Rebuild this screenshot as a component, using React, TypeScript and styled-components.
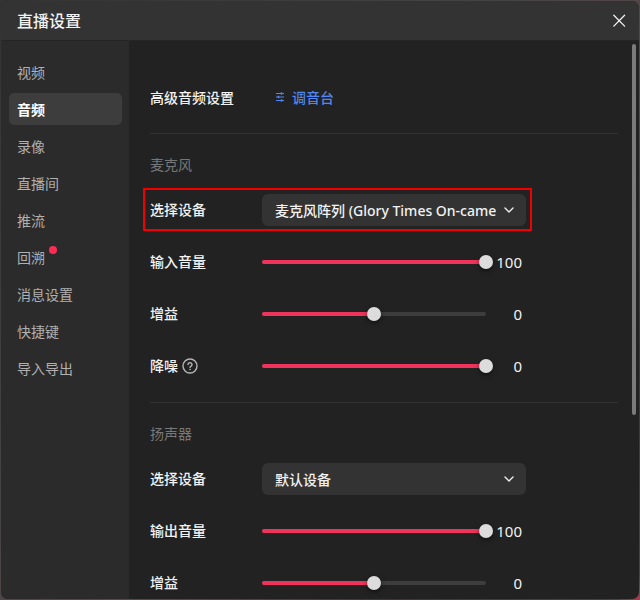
import React, { useState } from "react";
import styled, { createGlobalStyle, css } from "styled-components";

const GlobalStyle = createGlobalStyle`
  *, *::before, *::after { box-sizing: border-box; }
  body {
    margin: 0;
    background: linear-gradient(135deg, #333 0%, #444 40%, #5a484b 60%, #3c3638 80%, #444 98%, #b03a50 100%);
    color: #f2f2f2;
    font: 14px/20px "Noto Sans", "Noto Sans CJK SC", sans-serif;
  }
  button, input, select { font: inherit; color: inherit; }
`;

const Page = styled.div`
  height: 100vh;
  padding: 1px;
`;

const Dialog = styled.div`
  display: flex;
  flex-direction: column;
  height: 100%;
  overflow: hidden;
  border-radius: 7px;
  background: #222;
`;

const Header = styled.header`
  display: flex;
  flex: none;
  align-items: center;
  justify-content: space-between;
  height: 40px;
  padding: 0 13px 0 16px;
  background: #333;
  border-bottom: 1px solid #252525;
`;

const Title = styled.h1`
  margin: 0;
  font-size: 16px;
  line-height: 24px;
  font-weight: 500;
`;

const CloseButton = styled.button`
  display: flex;
  padding: 0;
  border: 0;
  background: none;
  cursor: pointer;
`;

const Body = styled.div`
  display: flex;
  flex: 1;
  min-height: 0;
`;

const Sidebar = styled.nav`
  display: flex;
  flex: 0 0 128px;
  flex-direction: column;
  gap: 5px;
  padding: 15px 7px 0 8px;
  background: #2b2b2b;
`;

const NavItem = styled.button<{ $active: boolean }>`
  height: 32px;
  padding: 2px 8px 0;
  border: 0;
  border-radius: 5px;
  background: none;
  color: #b0b0b0;
  text-align: left;
  cursor: pointer;
  ${(p) =>
    p.$active &&
    css`
      background: #3d3d3d;
      color: #fff;
      font-weight: 700;
    `}
`;

const NavText = styled.span`
  position: relative;
`;

const Dot = styled.i`
  position: absolute;
  top: -2px;
  right: -12px;
  width: 8px;
  height: 8px;
  border-radius: 50%;
  background: #fe2c55;
`;

const Content = styled.main`
  position: relative;
  flex: 1;
  min-width: 0;
  overflow: hidden;
  padding: 0 21px;
`;

const ScrollThumb = styled.div`
  position: absolute;
  top: 3px;
  right: 3px;
  width: 4px;
  height: 371px;
  border-radius: 2px;
  background: #7b7b7b;
`;

const Intro = styled.div`
  padding: 41px 0 19px;
`;

const Section = styled.section`
  display: flex;
  flex-direction: column;
  gap: 20px;
  padding: 21px 0 20px;
  border-top: 1px solid #323232;
`;

const SectionTitle = styled.h2`
  margin: 0 0 -1px;
  color: #777;
  font-size: 14px;
  line-height: 20px;
  font-weight: 400;
`;

const Row = styled.div<{ $marked?: boolean }>`
  position: relative;
  display: grid;
  grid-template-columns: 112px 1fr;
  align-items: center;
  height: 32px;
  max-width: 376px;
  font-weight: 500;
  ${(p) =>
    p.$marked &&
    css`
      &::after {
        content: "";
        position: absolute;
        inset: -6px -6px -5px -7px;
        border: 2px solid #f00000;
        pointer-events: none;
      }
    `}
`;

const LabelCell = styled.div`
  display: flex;
  align-items: center;
  gap: 4px;
`;

const HelpButton = styled(CloseButton)`
  color: #b4b4b4;
`;

const MixerLink = styled.a`
  display: flex;
  align-items: center;
  gap: 6px;
  padding-left: 12px;
  color: #4f86f0;
  text-decoration: none;
`;

const SelectBox = styled.div`
  position: relative;
  height: 32px;
`;

const Select = styled.select`
  width: 100%;
  height: 32px;
  padding: 1px 30px 0 13px;
  appearance: none;
  border: 0;
  border-radius: 6px;
  background: #333;
  font-weight: 500;
  text-overflow: clip;
`;

const Chevron = styled.svg`
  position: absolute;
  top: 11px;
  right: 12px;
  pointer-events: none;
`;

const SliderCell = styled.div`
  display: flex;
  align-items: center;
`;

const SliderBox = styled.div`
  position: relative;
  flex: 1;
  height: 14px;
  padding: 5px 0;
`;

const Rail = styled.div`
  height: 4px;
  border-radius: 2px;
  background: #3d3d3d;
`;

const Fill = styled.div`
  height: 4px;
  border-radius: 2px;
  background: #f0335a;
`;

const Range = styled.input`
  position: absolute;
  inset: 0 -7px;
  width: calc(100% + 14px);
  height: 14px;
  margin: 0;
  appearance: none;
  background: none;
  cursor: pointer;
  &::-webkit-slider-thumb {
    appearance: none;
    width: 14px;
    height: 14px;
    border-radius: 50%;
    background: #dcdcdc;
    box-shadow: 0 2px 5px rgba(0, 0, 0, 0.5);
  }
`;

const Value = styled.output`
  flex: 0 0 40px;
  padding-right: 4px;
  font-size: 15px;
  font-weight: 400;
  text-align: right;
`;

function SelectRow({ id, option, marked }: { id: string; option: string; marked?: boolean }) {
  return (
    <Row $marked={marked}>
      <label htmlFor={id}>选择设备</label>
      <SelectBox>
        <Select id={id}>
          <option>{option}</option>
        </Select>
        <Chevron width="10" height="10" viewBox="0 0 10 10" fill="none" stroke="#eee" strokeWidth="1.4" strokeLinecap="round" strokeLinejoin="round">
          <path d="M1 3l4 4 4-4" />
        </Chevron>
      </SelectBox>
    </Row>
  );
}

function SliderRow({ id, label, position, value, help }: { id: string; label: string; position: number; value: number; help?: boolean }) {
  const [current, setCurrent] = useState(position);
  return (
    <Row>
      <LabelCell>
        <label htmlFor={id}>{label}</label>
        {help && (
          <HelpButton type="button" aria-label="降噪说明">
            <svg width="16" height="16" viewBox="0 0 16 16" fill="none" stroke="currentColor" strokeWidth="1.4">
              <circle cx="8" cy="8" r="7" />
              <path d="M6 6.5a2 1.9 0 1 1 3.1 1.6C8.300 8.600 8 8.900 8 9.600" strokeLinecap="round" strokeWidth="1.4" />
              <circle cx="8" cy="11.500" r=".8" fill="currentColor" stroke="none" />
            </svg>
          </HelpButton>
        )}
      </LabelCell>
      <SliderCell>
        <SliderBox>
          <Rail>
            <Fill style={{ width: `${current}%` }} />
          </Rail>
          <Range id={id} type="range" min={0} max={100} value={current} onChange={(e) => setCurrent(Number(e.target.value))} />
        </SliderBox>
        <Value htmlFor={id}>{value + current - position}</Value>
      </SliderCell>
    </Row>
  );
}

const navItems = ["视频", "音频", "录像", "直播间", "推流", "回溯", "消息设置", "快捷键", "导入导出"];

export default function App() {
  const [active, setActive] = useState("音频");
  return (
    <Page>
      <GlobalStyle />
      <Dialog role="dialog" aria-labelledby="dialog-title">
        <Header>
          <Title id="dialog-title">直播设置</Title>
          <CloseButton type="button" aria-label="关闭">
            <svg width="14" height="14" viewBox="0 0 14 14" fill="none" stroke="#f2f2f2" strokeWidth="1.3" strokeLinecap="round">
              <path d="M1.800 1.300l10.800 10.800M12.600 1.300l-10.800 10.800" />
            </svg>
          </CloseButton>
        </Header>
        <Body>
          <Sidebar>
            {navItems.map((name) => (
              <NavItem key={name} type="button" $active={name === active} onClick={() => setActive(name)}>
                <NavText>
                  {name}
                  {name === "回溯" && <Dot />}
                </NavText>
              </NavItem>
            ))}
          </Sidebar>
          <Content>
            <Intro>
              <Row>
                <span>高级音频设置</span>
                <MixerLink href="#mixer">
                  <svg width="12" height="12" viewBox="0 0 12 12" fill="none" stroke="currentColor">
                    <path d="M2 1.500h8M2 5h8M2 8.500h8" />
                    <path d="M7.500 .3v2.400M4.500 3.800v2.400M7.500 7.300v2.400" strokeWidth="1.5" />
                  </svg>
                  调音台
                </MixerLink>
              </Row>
            </Intro>
            <Section>
              <SectionTitle>麦克风</SectionTitle>
              <SelectRow id="mic-device" option="麦克风阵列 (Glory Times On-camera)" marked />
              <SliderRow id="mic-volume" label="输入音量" position={100} value={100} />
              <SliderRow id="mic-gain" label="增益" position={50} value={0} />
              <SliderRow id="mic-denoise" label="降噪" position={100} value={0} help />
            </Section>
            <Section>
              <SectionTitle>扬声器</SectionTitle>
              <SelectRow id="speaker-device" option="默认设备" />
              <SliderRow id="speaker-volume" label="输出音量" position={100} value={100} />
              <SliderRow id="speaker-gain" label="增益" position={50} value={0} />
            </Section>
            <ScrollThumb />
          </Content>
        </Body>
      </Dialog>
    </Page>
  );
}
